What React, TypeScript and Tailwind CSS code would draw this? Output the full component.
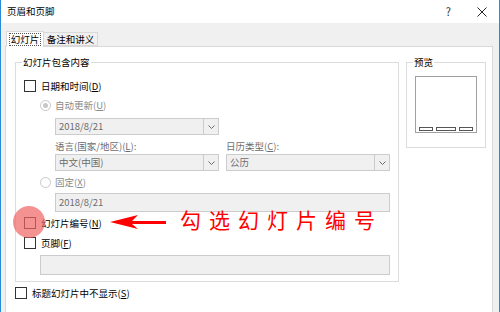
import React from "react";

const Check = () => (
  <span className="w-[12px] h-[12px] border border-[#333333] bg-white shrink-0" />
);

const Radio = ({ on }: { on?: boolean }) => (
  <span className="w-[11px] h-[11px] rounded-full border border-[#c8c8c8] bg-white shrink-0 flex items-center justify-center">
    {on && <span className="w-[5px] h-[5px] rounded-full bg-[#c8c8c8]" />}
  </span>
);

const Select = ({ value, w }: { value: string; w: string }) => (
  <div className={`${w} h-[17px] flex border border-[#cccccc] bg-[#f0f0f0]`}>
    <span className="flex-1 pl-[3px] leading-[15px] text-[#6d6d6d]">{value}</span>
    <span className="w-[15px] border-l border-[#cccccc] flex items-center justify-center">
      <svg width="7" height="4" viewBox="0 0 7 4">
        <path d="M0.5 0.5 L3.5 3.5 L6.5 0.5" stroke="#6d6d6d" fill="none" />
      </svg>
    </span>
  </div>
);

export default function App() {
  return (
    <div className="w-[500px] h-[312px] overflow-hidden flex flex-col bg-[#f0f0f0] border-x border-[#2b8ad8] text-[9.5px] text-black font-['Noto_Sans_CJK_SC','Microsoft_YaHei',sans-serif]">
      {/* title bar */}
      <div className="h-[23px] shrink-0 bg-white flex items-center pl-[6px] pr-[12px]">
        <span>页眉和页脚</span>
        <span className="ml-auto mr-[26px] text-[11px] text-[#333]">?</span>
        <svg width="10" height="10" viewBox="0 0 10 10">
          <path d="M0.5 0.5 L9.5 9.5 M9.5 0.5 L0.5 9.5" stroke="#222" strokeWidth="1" />
        </svg>
      </div>

      {/* tabs */}
      <div className="h-[24px] shrink-0 flex items-end pl-[5px]">
        <div className="relative z-10 h-[16px] w-[38px] bg-white border border-b-0 border-[#d9d9d9] flex items-center justify-center">
          <span className="border border-dotted border-[#555] px-[1px] leading-[11px]">幻灯片</span>
        </div>
        <div className="h-[14px] w-[54px] border border-l-0 border-[#d9d9d9] flex items-center justify-center mb-[1px]">
          备注和讲义
        </div>
      </div>

      {/* panel */}
      <div className="relative -mt-[1px] ml-[4px] mr-[6px] h-[300px] shrink-0 bg-white border border-[#d9d9d9]">
        <div className="flex">
          {/* contents group */}
          <div className="relative mt-[15px] ml-[9px] w-[384px] h-[220px] border border-[#dcdcdc] flex flex-col">
            <span className="absolute -top-[8px] left-[6px] bg-white px-[1px] leading-[14px]">幻灯片包含内容</span>

            <div className="mt-[15px] pl-[8px] h-[16px] flex items-center gap-[5px]">
              <Check />
              <span>
                日期和时间(<u>D</u>)
              </span>
            </div>

            <div className="mt-[3px] pl-[24px] h-[16px] flex items-center gap-[4px] text-[#8a8a8a]">
              <Radio on />
              <span>
                自动更新(<u>U</u>)
              </span>
            </div>

            <div className="mt-[5px] pl-[39px]">
              <Select value="2018/8/21" w="w-[164px]" />
            </div>

            <div className="mt-[3px] pl-[39px] flex gap-[7px] text-[#6d6d6d]">
              <div className="w-[164px] flex flex-col">
                <span className="h-[16px] leading-[16px]">
                  语言(国家/地区)(<u>L</u>):
                </span>
                <Select value="中文(中国)" w="w-[164px]" />
              </div>
              <div className="w-[164px] flex flex-col">
                <span className="h-[16px] leading-[16px]">
                  日历类型(<u>C</u>):
                </span>
                <Select value="公历" w="w-[164px]" />
              </div>
            </div>

            <div className="mt-[3px] pl-[24px] h-[16px] flex items-center gap-[4px] text-[#8a8a8a]">
              <Radio />
              <span>
                固定(<u>X</u>)
              </span>
            </div>

            <div className="mt-[3px] ml-[39px] w-[335px] h-[19px] border border-[#cccccc] bg-[#f0f0f0] pl-[3px] leading-[17px] text-[#6d6d6d]">
              2018/8/21
            </div>

            <div className="mt-[3px] pl-[8px] h-[16px] flex items-center gap-[5px]">
              <Check />
              <span>
                幻灯片编号(<u>N</u>)
              </span>
            </div>

            <div className="mt-[4px] pl-[8px] h-[16px] flex items-center gap-[5px]">
              <Check />
              <span>
                页脚(<u>F</u>)
              </span>
            </div>

            <div className="mt-[4px] ml-[24px] w-[350px] h-[20px] border border-[#cccccc] bg-[#f0f0f0]" />
          </div>

          {/* preview group */}
          <div className="relative mt-[15px] ml-[7px] w-[80px] h-[86px] border border-[#dcdcdc]">
            <span className="absolute -top-[8px] left-[6px] bg-white px-[1px] leading-[14px]">预览</span>
            <div className="mt-[13px] ml-[8px] w-[62px] h-[57px] border border-[#a0a0a0] flex items-end justify-center gap-[3px] pb-[1px]">
              <span className="w-[14px] h-[4px] border border-[#555]" />
              <span className="w-[20px] h-[4px] border border-[#555]" />
              <span className="w-[14px] h-[4px] border border-[#555]" />
            </div>
          </div>
        </div>

        <div className="mt-[3px] pl-[9px] h-[16px] flex items-center gap-[5px]">
          <Check />
          <span>
            标题幻灯片中不显示(<u>S</u>)
          </span>
        </div>

        {/* annotation overlay */}
        <span className="absolute left-[7px] top-[159px] w-[32px] h-[32px] rounded-full bg-[rgba(240,100,100,0.7)]" />
        <svg className="absolute left-[102px] top-[167px]" width="60" height="16" viewBox="0 0 60 16">
          <path d="M2 8 L30 1 L24 7 L58 7 L58 10 L24 10 L30 15 Z" fill="#ff0000" />
        </svg>
        <span className="absolute left-[174px] top-[160px] text-[21px] leading-[24px] tracking-[8px] text-[#ff0000]">
          勾选幻灯片编号
        </span>
      </div>
    </div>
  );
}
